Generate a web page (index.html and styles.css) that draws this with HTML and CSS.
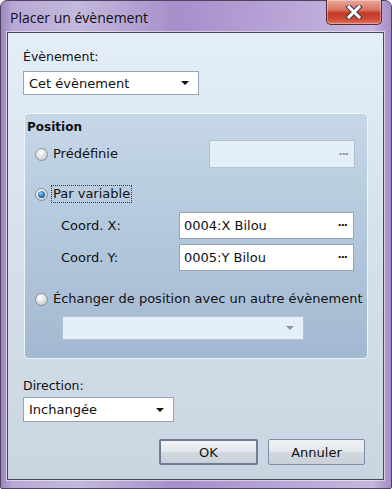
FILE: index.html
```html
<!DOCTYPE html>
<html lang="fr">
<head>
    <meta charset="UTF-8">
    <meta name="viewport" content="width=device-width, initial-scale=1.0">
    <title>Placer un évènement</title>
    <link rel="stylesheet" href="styles.css">
</head>
<body>

    <div class="window">
        <!-- barre de titre -->
        <div class="titlebar">
            <span class="title">Placer un évènement</span>
            <div class="close">
                <svg width="22" height="14" viewBox="0 0 22 14">
                    <path d="M6 2 L16 12 M16 2 L6 12" stroke="#3b3b4a" stroke-width="5" stroke-linecap="square"/>
                    <path d="M6 2 L16 12 M16 2 L6 12" stroke="#fff" stroke-width="3" stroke-linecap="square"/>
                </svg>
            </div>
        </div>

        <div class="client">
            <div class="label first">Évènement:</div>
            <div class="combo combo-event">
                <span>Cet évènement</span>
                <span class="arrow"></span>
            </div>

            <div class="group">
                <div class="group-title">Position</div>

                <div class="row row-predef">
                    <span class="radio"></span>
                    <span class="radio-text">Prédéfinie</span>
                    <div class="picker disabled">
                        <span></span>
                        <span class="dots">···</span>
                    </div>
                </div>

                <div class="row row-var">
                    <span class="radio checked"></span>
                    <span class="radio-text focus">Par variable</span>
                </div>

                <div class="row row-coord first-coord">
                    <span class="coord-label">Coord. X:</span>
                    <div class="picker">
                        <span>0004:X Bilou</span>
                        <span class="dots">···</span>
                    </div>
                </div>

                <div class="row row-coord">
                    <span class="coord-label">Coord. Y:</span>
                    <div class="picker">
                        <span>0005:Y Bilou</span>
                        <span class="dots">···</span>
                    </div>
                </div>

                <div class="row row-swap">
                    <span class="radio"></span>
                    <span class="radio-text">Échanger de position avec un autre évènement</span>
                </div>

                <div class="combo combo-swap disabled">
                    <span></span>
                    <span class="arrow"></span>
                </div>
            </div>

            <div class="label">Direction:</div>
            <div class="combo combo-dir">
                <span>Inchangée</span>
                <span class="arrow"></span>
            </div>

            <div class="buttons">
                <button class="btn default">OK</button>
                <button class="btn">Annuler</button>
            </div>
        </div>
    </div>

</body>
</html>
```

FILE: styles.css
```css
html, body {
    margin: 0;
    padding: 0;
}

body {
    width: 392px;
    height: 489px;
    overflow: hidden;
    background: #fff;
}

.window {
    box-sizing: border-box;
    width: 392px;
    height: 489px;
    border: 1px solid #4d4560;
    border-radius: 7px 7px 2px 2px;
    background: linear-gradient(to right, #9d86bf 0%, #b9a9d6 3%, #c4b8dd 20%, #a78fca 45%, #b7a2d6 70%, #c5b6de 95%, #a58ec6 100%);
    display: flex;
    flex-direction: column;
    font-family: "DejaVu Sans", Verdana, sans-serif;
    font-size: 12px;
    color: #111;
}

/* barre de titre */
.titlebar {
    height: 31px;
    position: relative;
    flex: none;
}

.title {
    position: absolute;
    left: 9px;
    top: 7px;
    font-family: "Open Sans", "Noto Sans", sans-serif;
    font-size: 14px;
    color: #111;
}

.close {
    position: absolute;
    right: 9px;
    top: -1px;
    width: 56px;
    height: 25px;
    box-sizing: border-box;
    border: 1px solid #5a2a32;
    border-top: none;
    border-radius: 0 0 5px 5px;
    background: linear-gradient(to bottom, #e9a99b 0%, #d97663 40%, #c23a26 55%, #cc4a35 80%, #e07560 100%);
    box-shadow: inset 0 0 0 1px rgba(255, 255, 255, 0.35);
    display: flex;
    align-items: center;
    justify-content: center;
}

/* zone client */
.client {
    flex: none;
    margin: 0 7px 0 6px;
    height: 448px;
    box-sizing: border-box;
    border: 1px solid #474a58;
    box-shadow: 0 0 0 1px rgba(255, 255, 255, 0.5);
    background: linear-gradient(to bottom, #e4eef9 0%, #d6e1ec 45%, #c9d5e0 100%);
    padding: 0 17px 0 15px;
    display: flex;
    flex-direction: column;
}

.label {
    height: 16px;
    line-height: 16px;
    margin-top: 19px;
    font-size: 12.5px;
}

.label.first {
    margin-top: 16px;
}

.combo {
    box-sizing: border-box;
    height: 24px;
    margin-top: 6px;
    border: 1px solid #95a5b7;
    background: #fff;
    display: flex;
    align-items: center;
    justify-content: space-between;
    padding: 0 9px 0 5px;
    font-size: 13px;
}

.combo-event {
    width: 176px;
}

.combo-dir {
    width: 151px;
    height: 25px;
    margin-top: 3px;
}

.combo-swap {
    width: 242px;
    margin-left: 35px;
    margin-top: 8px;
}

.arrow {
    width: 0;
    height: 0;
    border-left: 4px solid transparent;
    border-right: 4px solid transparent;
    border-top: 4px solid #111;
}

/* groupe position */
.group {
    box-sizing: border-box;
    width: 344px;
    height: 246px;
    margin: 18px 0 0 1px;
    border: 1px solid #eef3f8;
    border-radius: 5px;
    background: linear-gradient(to bottom, #c6d7e8 0%, #b5c9de 45%, #a3b9d1 100%);
    padding: 5px 0 0 2px;
    display: flex;
    flex-direction: column;
}

.group-title {
    font-weight: bold;
    height: 16px;
    line-height: 16px;
}

.row {
    display: flex;
    align-items: center;
    font-size: 13px;
}

.row-predef {
    height: 28px;
    margin-top: 5px;
    padding-left: 8px;
}

.row-predef .picker {
    margin-left: auto;
    margin-right: 12px;
    width: 146px;
    height: 28px;
}

.row-var {
    height: 18px;
    margin-top: 17px;
    padding-left: 8px;
}

.row-coord {
    height: 27px;
    margin-top: 5px;
    padding-left: 34px;
}

.first-coord {
    margin-top: 9px;
}

.row-swap {
    height: 18px;
    margin-top: 19px;
    padding-left: 8px;
}

.radio {
    box-sizing: border-box;
    width: 13px;
    height: 13px;
    border-radius: 50%;
    border: 1px solid #8c8f94;
    background: radial-gradient(circle at 40% 35%, #ffffff 0%, #e6e6e6 40%, #b9bcc0 100%);
    margin-right: 4px;
    flex: none;
    position: relative;
}

.radio.checked::after {
    content: "";
    position: absolute;
    left: 2px;
    top: 2px;
    width: 7px;
    height: 7px;
    border-radius: 50%;
    background: radial-gradient(circle at 40% 35%, #8fd3ff 0%, #2a7fc4 50%, #0d3f78 100%);
}

.radio-text {
    padding: 0 1px;
    line-height: 16px;
}

.focus {
    outline: 1px dotted #3a3a3a;
    outline-offset: 0;
}

.coord-label {
    width: 118px;
    flex: none;
}

.picker {
    box-sizing: border-box;
    width: 175px;
    height: 27px;
    border: 1px solid #95a5b7;
    background: #fff;
    display: flex;
    align-items: center;
    justify-content: space-between;
    padding: 0 6px 0 4px;
}

.dots {
    font-weight: bold;
    font-size: 11px;
    letter-spacing: -1px;
    color: #111;
}

/* champs inactifs */
.combo.disabled,
.picker.disabled {
    background: #e4eef9;
    border-color: #b3c1d1;
}

.combo.disabled .arrow {
    border-top-color: #8b8fa8;
}

.picker.disabled .dots {
    color: #8b8fa8;
}

/* boutons */
.buttons {
    display: flex;
    justify-content: flex-end;
    gap: 10px;
    margin-top: 17px;
    margin-right: 1px;
}

.btn {
    box-sizing: border-box;
    width: 97px;
    height: 26px;
    border: 1px solid #7f8ea3;
    border-radius: 2px;
    background: linear-gradient(to bottom, #f1f3f6 0%, #e3e7ec 48%, #d2d8df 52%, #c9d0d8 100%);
    font-family: "DejaVu Sans", Verdana, sans-serif;
    font-size: 13px;
    color: #111;
    padding: 0;
}

.btn.default {
    width: 99px;
    border: 2px solid #6d7d93;
}
```
